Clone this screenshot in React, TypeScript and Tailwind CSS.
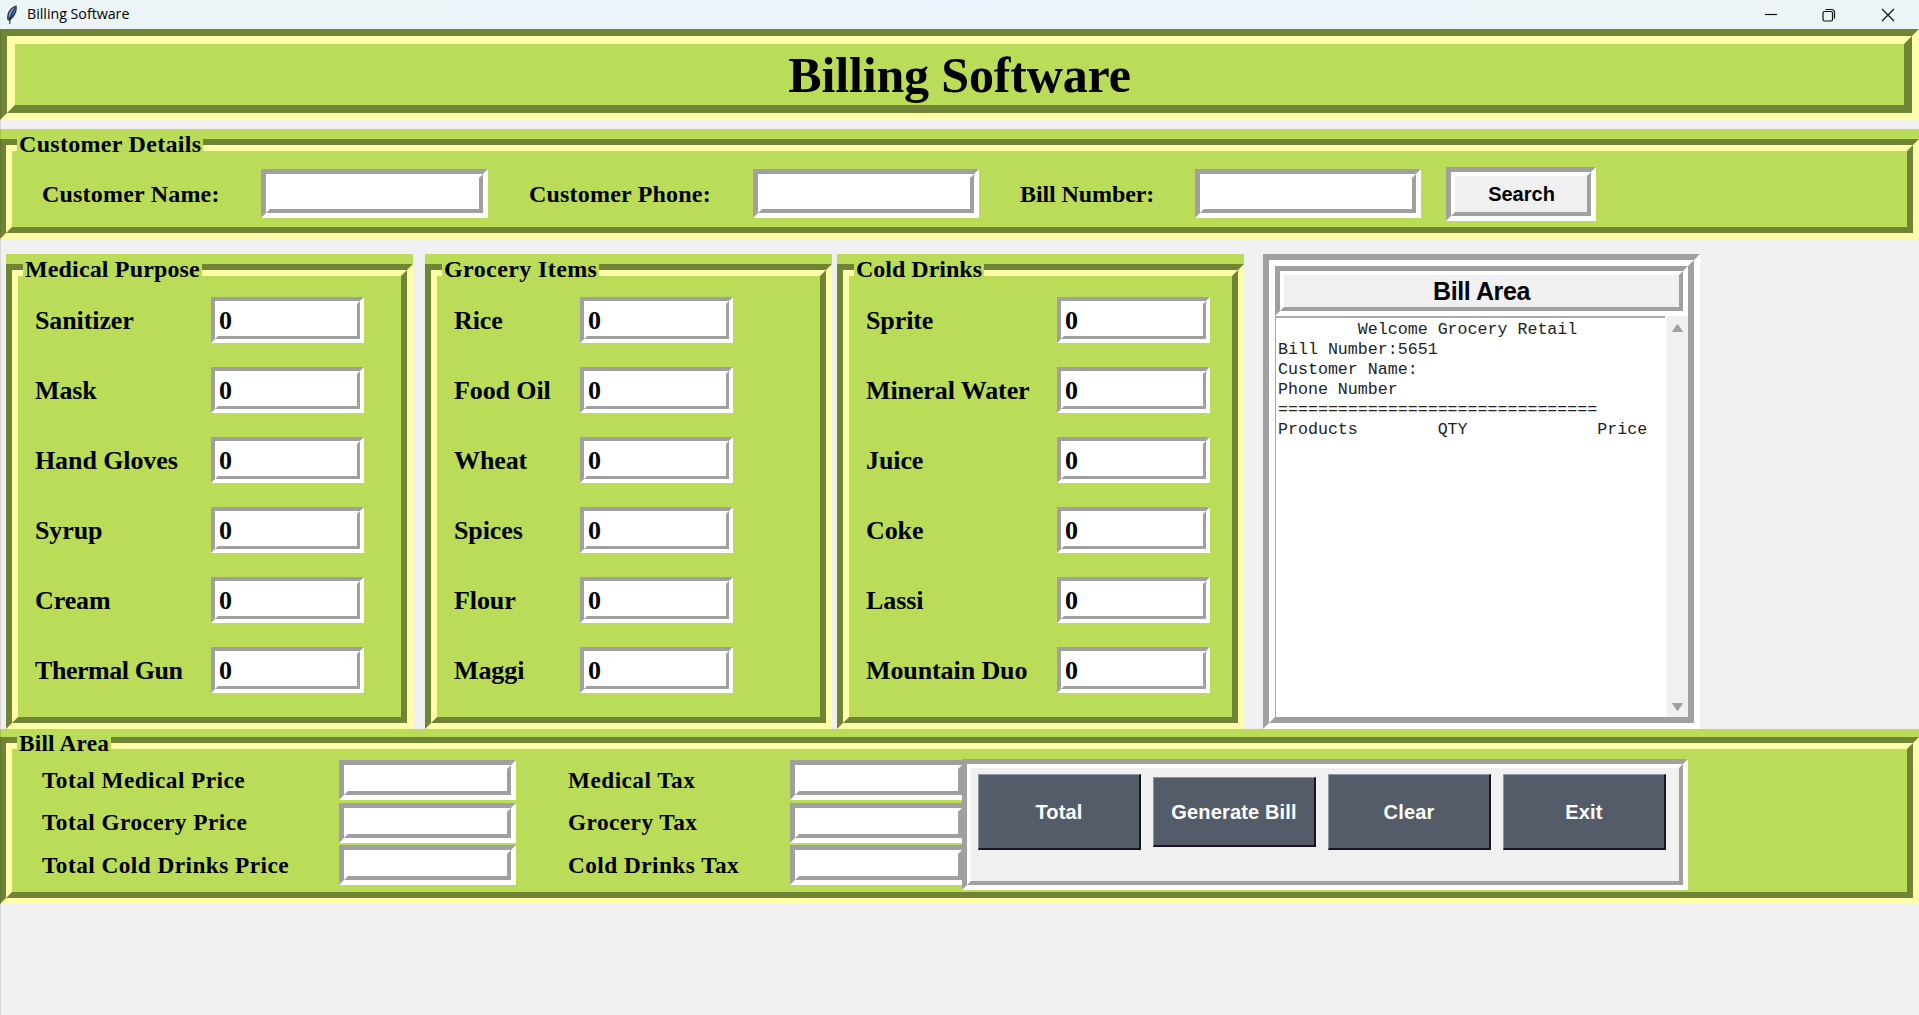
import type { ReactNode } from "react";

const SERIF = "font-['Liberation_Serif'] font-bold";
const SANS = "font-['Liberation_Sans'] font-bold";

/* Sunken entry field with a two-tone grooved edge. */
function Entry({ size, value }: { size: string; value?: string }) {
  return (
    <div className={`${size} shrink-0 border-[5px] border-t-[#a0a0a0] border-l-[#a0a0a0] border-r-white border-b-white`}>
      <div className="h-full border-4 border-t-white border-l-white border-r-[#a0a0a0] border-b-[#a0a0a0] bg-white">{value}</div>
    </div>
  );
}

function QtyEntry({ value }: { value: string }) {
  return (
    <div className="h-[46px] w-[153px] shrink-0 border-4 border-t-[#a0a0a0] border-l-[#a0a0a0] border-r-white border-b-white">
      <div className={`flex h-full items-center border-[3px] border-t-white border-l-white border-r-[#a0a0a0] border-b-[#a0a0a0] bg-white pl-px text-[26px] leading-none ${SERIF}`}>
        <span className="relative top-px">{value}</span>
      </div>
    </div>
  );
}

/* Green label frame: caption sits on top of the groove. */
function LabelFrame({
  title,
  className,
  top = "pt-[10px]",
  caption = "top-[6px] text-[24px] tracking-[0.2px]",
  children,
}: {
  title: string;
  className: string;
  top?: string;
  caption?: string;
  children: ReactNode;
}) {
  return (
    <section className={`relative shrink-0 bg-[#badc58] ${top} ${className}`}>
      <div className="h-full border-6 border-t-[#708435] border-l-[#708435] border-r-[#ffffa9] border-b-[#ffffa9]">
        <div className="h-full border-[6px] border-t-[#ffffa9] border-l-[#ffffa9] border-r-[#708435] border-b-[#708435]">{children}</div>
      </div>
      <h2 className={`absolute left-[17px] h-[21px] bg-[#badc58] px-[2px] leading-[18px] whitespace-nowrap ${SERIF} ${caption}`}>{title}</h2>
    </section>
  );
}

type ItemPanelProps = {
  title: string;
  items: string[];
  className: string;
  labelWidth: string;
  caption: string;
};

function ItemPanel({ title, items, className, labelWidth, caption }: ItemPanelProps) {
  return (
    <LabelFrame title={title} className={`h-[475px] w-[407px] ${className}`} caption={caption}>
      <div className="flex flex-col gap-6 pt-[21px] pl-[17px]">
        {items.map((item) => (
          <div key={item} className="flex items-center">
            <span className={`${labelWidth} shrink-0 text-[26px] leading-none whitespace-nowrap ${item === "Thermal Gun" ? "tracking-[-0.45px]" : "tracking-[-0.1px]"} ${SERIF}`}>
              <span className="relative top-px">{item}</span>
            </span>
            <QtyEntry value="0" />
          </div>
        ))}
      </div>
    </LabelFrame>
  );
}

function ActionButton({ label, height }: { label: string; height: string }) {
  return (
    <button className={`${height} w-[163px] shrink-0 border-t border-r-2 border-b-2 border-l border-t-[#8d94a3] border-l-[#8d94a3] border-r-[#15171c] border-b-[#15171c] bg-[#535c68] text-[20px] leading-none tracking-[0.15px] text-white ${SANS}`}>
      {label}
    </button>
  );
}

const MEDICAL = ["Sanitizer", "Mask", "Hand Gloves", "Syrup", "Cream", "Thermal Gun"];
const GROCERY = ["Rice", "Food Oil", "Wheat", "Spices", "Flour", "Maggi"];
const DRINKS = ["Sprite", "Mineral Water", "Juice", "Coke", "Lassi", "Mountain Duo"];

const RECEIPT = [
  "        Welcome Grocery Retail",
  "Bill Number:5651",
  "Customer Name:",
  "Phone Number",
  "================================",
  "Products        QTY             Price",
].join("\n");

function TitleBar() {
  return (
    <header className="flex h-[29px] shrink-0 items-center bg-linear-to-r from-[#ecf5f6] via-[#ecf3fc] to-[#ecf5f6]">
      <svg className="ml-[6px] h-5 w-3" viewBox="0 0 12 20">
        <path d="M10.5 0.300C5 1.500 0 7.500 1.200 14.500l1.800 1.500C8 13.500 12 6.500 10.500 0.300Z" fill="#39414f" />
        <path d="M9.500 1.800C5.500 4 2.800 8 2.600 13 6.800 10.800 10 6.500 9.500 1.800Z" fill="#3f7fd0" />
        <path d="M9 3C6 7 3.800 11 3.800 19" stroke="#23272f" strokeWidth="1.100" fill="none" />
        <path d="M7.500 3.500C5.500 5.500 4 8 3.500 10.500" stroke="#a9c6ea" strokeWidth="0.900" fill="none" />
      </svg>
      <span className="ml-[9px] text-[14.200px] leading-none text-black font-['Open_Sans']">Billing Software</span>
      <div className="ml-auto flex items-center pr-[24px]">
        <svg className="h-[14px] w-[130px]" viewBox="0 0 130 14" fill="none" stroke="#111" strokeWidth="1.200">
          <path d="M0 6.500h12" />
          <path d="M59.500 3.500h6.500q1.500 0 1.500 1.500v6.500q0 1.500-1.500 1.500h-6.500q-1.500 0-1.500-1.500v-6.500q0-1.500 1.500-1.500M60.500 1.500h6q3 0 3 3v6" />
          <path d="M117 1l12 12M129 1l-12 12" />
        </svg>
      </div>
    </header>
  );
}

export default function App() {
  return (
    <main className="relative flex h-[1015px] w-[1919px] flex-col overflow-hidden bg-[#f0f0f0] text-black">
      <TitleBar />

      <div className="h-[91px] shrink-0 border-[7px] border-t-[#708435] border-l-[#708435] border-r-[#ffffa9] border-b-[#ffffa9]">
        <div className="flex h-full items-center justify-center border-8 border-t-[#ffffa9] border-l-[#ffffa9] border-r-[#708435] border-b-[#708435] bg-[#badc58]">
          <h1 className={`text-[50px] leading-[56px] tracking-[-0.15px] ${SERIF}`}>Billing Software</h1>
        </div>
      </div>

      <LabelFrame title="Customer Details" className="mt-[9px] h-[110px]" caption="top-[6px] text-[24px] tracking-[0.3px]">
        <div className={`flex h-full items-center pt-[9px] pl-[30px] text-[24px] leading-none tracking-[0.2px] ${SERIF}`}>
          <span className="w-[219px]">Customer Name:</span>
          <Entry size="h-[49px] w-[227px]" />
          <span className="ml-[41px] w-[224px]">Customer Phone:</span>
          <Entry size="h-[49px] w-[226px]" />
          <span className="ml-[41px] w-[175px] tracking-[-0.100px]">Bill Number:</span>
          <Entry size="h-[49px] w-[226px]" />
          <button className="ml-[25px] h-[54px] w-[150px] border-[5px] border-t-[#a0a0a0] border-l-[#a0a0a0] border-r-white border-b-white">
            <span className={`flex h-full items-center justify-center border-4 border-t-white border-l-white border-r-[#a0a0a0] border-b-[#a0a0a0] bg-[#f0f0f0] pl-px text-[20px] tracking-normal ${SANS}`}>Search</span>
          </button>
        </div>
      </LabelFrame>

      <div className="flex h-[490px] shrink-0 pt-[15px]">
        <ItemPanel title="Medical Purpose" items={MEDICAL} className="ml-[6px]" labelWidth="w-[176px]" caption="top-[6px] text-[24px] tracking-[0.15px]" />
        <ItemPanel title="Grocery Items" items={GROCERY} className="ml-[12px]" labelWidth="w-[126px]" caption="top-[6px] text-[24px] tracking-[0.4px]" />
        <ItemPanel title="Cold Drinks" items={DRINKS} className="ml-[5px]" labelWidth="w-[191px]" caption="top-[6px] text-[24px] tracking-[0px]" />

        <section className="ml-[19px] h-[475px] w-[437px] shrink-0 border-[6px] border-t-[#a0a0a0] border-l-[#a0a0a0] border-r-white border-b-white">
          <div className="flex h-full flex-col border-[6px] border-t-white border-l-white border-r-[#a0a0a0] border-b-[#a0a0a0]">
            <div className="h-[50px] shrink-0 border-[5px] border-t-[#a0a0a0] border-l-[#a0a0a0] border-r-white border-b-white">
              <h2 className={`flex h-full items-center justify-center border-4 border-t-white border-l-white border-r-[#a0a0a0] border-b-[#a0a0a0] bg-[#f0f0f0] text-[25px] leading-none tracking-[-0.4px] ${SANS}`}>Bill Area</h2>
            </div>
            <div className="flex min-h-0 flex-1 bg-white">
              <pre className="w-[390px] border-t-2 border-l border-[#a9a9a9] pt-[2px] pl-[2px] text-[16.640px] leading-5 font-['Liberation_Mono'] text-[#222]">{RECEIPT}</pre>
              <div className="ml-[2px] flex flex-1 flex-col items-center justify-between bg-[#f0f0f0] pt-2 pb-[6px]">
                <svg className="h-2 w-[11px]" viewBox="0 0 11 8"><path d="M5.500 0.500 10.500 7.500H0.500Z" fill="#a0a0a0" stroke="#a0a0a0" strokeLinejoin="round" /></svg>
                <svg className="h-2 w-[11px]" viewBox="0 0 11 8"><path d="M5.500 7.500 10.500 0.500H0.500Z" fill="#a0a0a0" stroke="#a0a0a0" strokeLinejoin="round" /></svg>
              </div>
            </div>
          </div>
        </section>
      </div>

      <LabelFrame title="Bill Area" className="h-[175px]" top="pt-[8px]" caption="top-[5px] text-[23.300px] tracking-[0.2px]">
        <div className={`flex pt-[11px] pl-[30px] text-[23.300px] leading-none tracking-[0.45px] ${SERIF}`}>
          <div className="flex flex-col gap-[2.500px]">
            {["Total Medical Price", "Total Grocery Price", "Total Cold Drinks Price"].map((t) => (
              <div key={t} className="flex items-center">
                <span className="w-[297px] pt-px">{t}</span>
                <Entry size="h-[40px] w-[177px]" />
              </div>
            ))}
          </div>
          <div className="ml-[52px] flex flex-col gap-[2.500px]">
            {["Medical Tax", "Grocery Tax", "Cold Drinks Tax"].map((t) => (
              <div key={t} className="flex items-center">
                <span className="w-[222px] pt-px">{t}</span>
                <Entry size="h-[40px] w-[177px]" />
              </div>
            ))}
          </div>
          <div className="relative mt-[-1px] ml-[-5px] h-[131px] w-[726px] border-[5px] border-t-[#a0a0a0] border-l-[#a0a0a0] border-r-white border-b-white tracking-normal">
            <div className="h-full border-4 border-t-white border-l-white border-r-[#a0a0a0] border-b-[#a0a0a0] bg-[#f0f0f0]">
              <div className="flex items-center gap-[12px] pt-[6px] pl-[7px]">
                <ActionButton label="Total" height="h-[76px]" />
                <ActionButton label="Generate Bill" height="h-[70px]" />
                <ActionButton label="Clear" height="h-[76px]" />
                <ActionButton label="Exit" height="h-[76px]" />
              </div>
            </div>
          </div>
        </div>
      </LabelFrame>

      <div className="absolute top-[29px] bottom-0 left-0 w-px bg-black/10" />
    </main>
  );
}
